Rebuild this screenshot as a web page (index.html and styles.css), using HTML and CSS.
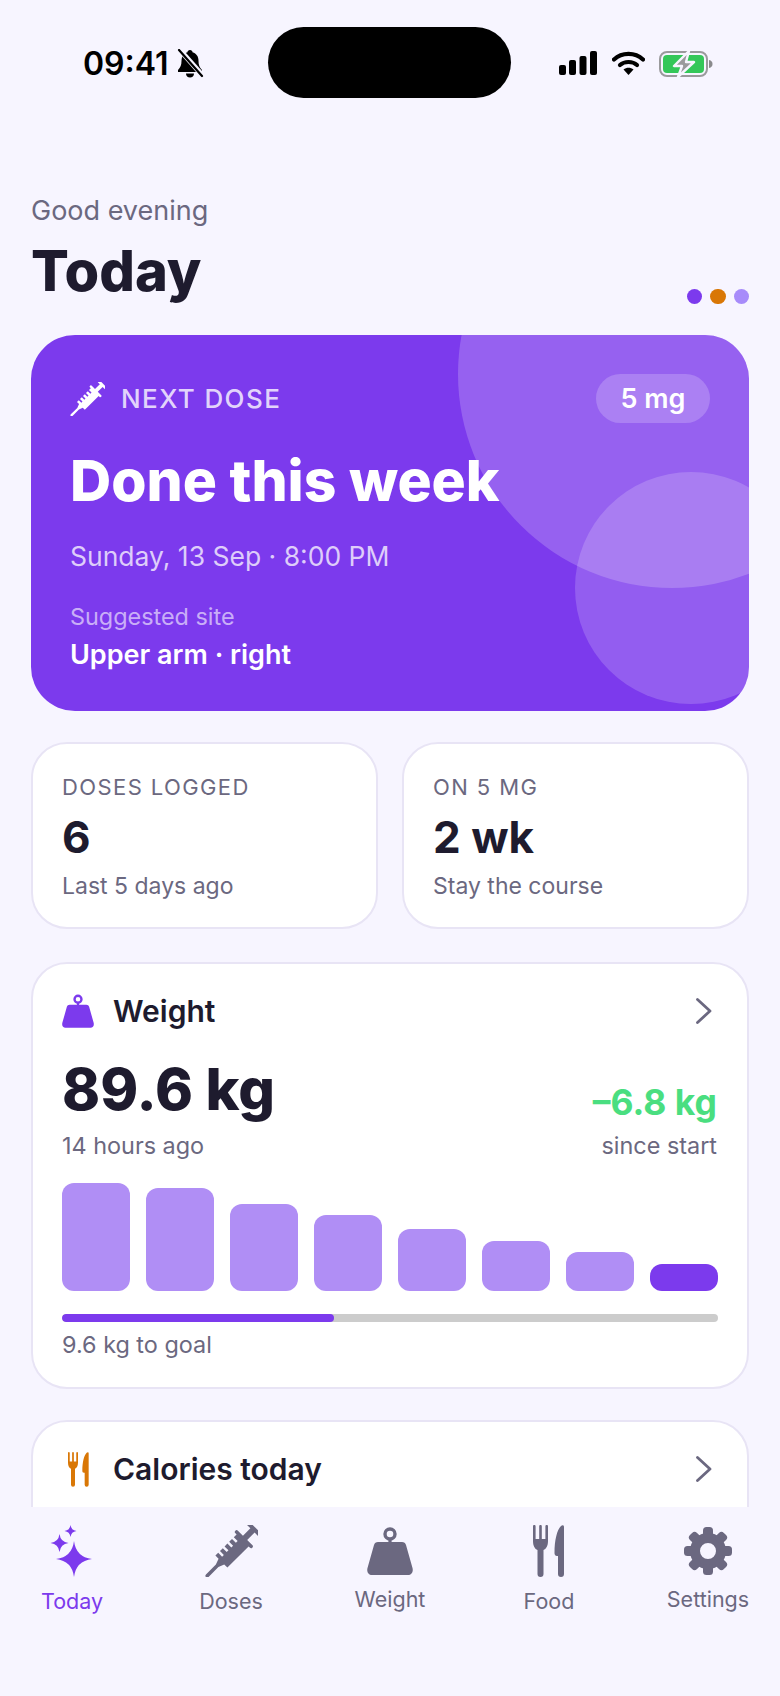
FILE: index.html
```html
<html>
<head>
    <title>Today</title>
    <link rel="stylesheet" href="styles.css">
</head>
<body>

<svg class="defs" width="0" height="0">
    <symbol id="syringe" viewBox="0 0 53 52">
        <g transform="translate(27 26) rotate(-45) translate(-35 0)">
            <path d="M0 -1.8 H14 L20 -4 V-8.5 H24 V-3 H26.5 V-8.5 H30.5 V-3 H33 V-8.5 H37 V-3 H39.5 V-8.5 H43.5 V-3 H46 V-8.5 H50 V-10.5 Q50 -12 51.7 -12 Q53.5 -12 53.5 -10.5 V-3 H64 V-9.5 Q64 -11 66 -11 Q68 -11 68 -9.5 V9.5 Q68 11 66 11 Q64 11 64 9.5 V3 H53.5 V10.5 Q53.5 12 51.7 12 Q50 12 50 10.5 V8.5 H20 V4 L14 1.8 H0 Q-1.8 1.8 -1.8 0 Q-1.8 -1.8 0 -1.8Z"/>
        </g>
    </symbol>
    <symbol id="scale" viewBox="0 0 46 48">
        <circle cx="23" cy="7" r="5" fill="none" stroke="currentColor" stroke-width="3.4"/>
        <path d="M21.4 11 H24.6 V16 H21.4Z"/>
        <path d="M11 15 H35 C37 15 38.5 16 39 18 L45.5 41 C46.5 45 44.5 48 41 48 H5 C1.5 48 -0.5 45 0.5 41 L7 18 C7.5 16 9 15 11 15Z"/>
    </symbol>
    <symbol id="cutlery" viewBox="0 0 33 52">
        <path d="M1.3 1.2 V15 M7.5 1.2 V15 M13.7 1.2 V15" fill="none" stroke="currentColor" stroke-width="2.6" stroke-linecap="round"/>
        <path d="M0 14 H15 V16 C15 21 13 24 10.5 25 V49 A3 3 0 0 1 4.5 49 V25 C2 24 0 21 0 16Z"/>
        <path d="M31 2 V49 A3 3 0 0 1 25 49 V31 H24 C22 31 21.5 29.5 21.5 28 C21.5 15 24 5 28 1 C29.5 -0.5 31 0 31 2Z"/>
    </symbol>
    <symbol id="chevron" viewBox="0 0 16 26">
        <path d="M1.5 1.5 L14 13 L1.5 24.5" fill="none" stroke="currentColor" stroke-width="2.8" stroke-linecap="round" stroke-linejoin="round"/>
    </symbol>
</svg>

<div id="outer">

    <div class="statusbar">
        <div class="status-left">
            <span class="clock">09:41</span>
            <svg class="bell" width="27" height="29" viewBox="0 0 27 29">
                <path d="M13 1 C14.5 1 15.5 2 15.5 3.2 C19.5 4.4 21.5 7.5 21.5 12 C21.5 16 22.5 18 25 21 V23 H1 V21 C3.5 18 4.5 16 4.5 12 C4.5 7.5 6.5 4.4 10.5 3.2 C10.5 2 11.5 1 13 1Z"/>
                <path d="M9 24.5 H17 C17 27 15.3 28.5 13 28.5 C10.7 28.5 9 27 9 24.5Z"/>
                <path d="M3 1 L26 27" stroke="#f7f5ff" stroke-width="5"/>
                <path d="M2 1 L25 27" stroke="#000" stroke-width="2.2" stroke-linecap="round"/>
            </svg>
        </div>
        <div class="island"></div>
        <div class="status-right">
            <svg width="38" height="24" viewBox="0 0 38 24">
                <rect x="0" y="14" width="7" height="10" rx="2"/>
                <rect x="10" y="9" width="7" height="15" rx="2"/>
                <rect x="20.5" y="5" width="7" height="19" rx="2"/>
                <rect x="31" y="0" width="7" height="24" rx="2"/>
            </svg>
            <svg class="wifi" width="33" height="24" viewBox="0 0 33 24">
                <path d="M2 8.5 C10 1 23 1 31 8.5" fill="none" stroke="#000" stroke-width="4.2" stroke-linecap="round"/>
                <path d="M8 14 C12.5 10 20.5 10 25 14" fill="none" stroke="#000" stroke-width="4.2" stroke-linecap="round"/>
                <path d="M11.5 18.5 C14.5 16 18.5 16 21.5 18.5 L16.5 24Z"/>
            </svg>
            <svg class="battery" width="54" height="26" viewBox="0 0 54 26">
                <rect x="1" y="1" width="47" height="24" rx="7" fill="none" stroke="#9a9a9c" stroke-width="2"/>
                <rect x="4" y="4" width="41" height="18" rx="4" fill="#34c759"/>
                <path d="M50 9 C52.5 9.5 53.5 11 53.5 13 C53.5 15 52.5 16.5 50 17Z" fill="#8a8a8c"/>
                <path d="M30 0 L15 15 H23 L19 26 L35 11 H27Z" fill="#9a9a9c" stroke="#f7f5ff" stroke-width="2.4" stroke-linejoin="round"/>
            </svg>
        </div>
    </div>

    <div class="content">
        <div class="pagehead">
            <div>
                <div class="greeting">Good evening</div>
                <h1 class="title">Today</h1>
            </div>
            <div class="dots">
                <span class="dot dot-purple"></span>
                <span class="dot dot-orange"></span>
                <span class="dot dot-light"></span>
            </div>
        </div>

        <div class="hero">
            <div class="circle circle-big"></div>
            <div class="circle circle-small"></div>
            <div class="hero-top">
                <div class="hero-label">
                    <svg class="hero-icon"><use href="#syringe"/></svg>
                    NEXT DOSE
                </div>
                <div class="pill">5 mg</div>
            </div>
            <div class="hero-title">Done this week</div>
            <div class="hero-date">Sunday, 13 Sep · 8:00 PM</div>
            <div class="hero-site-label">Suggested site</div>
            <div class="hero-site">Upper arm · right</div>
        </div>

        <div class="stats">
            <div class="card stat">
                <div class="stat-label">DOSES LOGGED</div>
                <div class="stat-value">6</div>
                <div class="muted">Last 5 days ago</div>
            </div>
            <div class="card stat">
                <div class="stat-label">ON 5 MG</div>
                <div class="stat-value">2 wk</div>
                <div class="muted">Stay the course</div>
            </div>
        </div>

        <div class="card panel">
            <div class="panel-head">
                <span class="panel-icon"><svg class="icon-scale"><use href="#scale"/></svg></span>
                <span class="panel-title">Weight</span>
                <svg class="chevron"><use href="#chevron"/></svg>
            </div>
            <div class="weight-row">
                <div>
                    <div class="weight-now">89.6 kg</div>
                    <div class="muted">14 hours ago</div>
                </div>
                <div class="weight-change">
                    <div class="weight-delta">–6.8 kg</div>
                    <div class="muted">since start</div>
                </div>
            </div>
            <div class="bars">
                <div class="bar" style="height: 108px"></div>
                <div class="bar" style="height: 103px"></div>
                <div class="bar" style="height: 87px"></div>
                <div class="bar" style="height: 76px"></div>
                <div class="bar" style="height: 62px"></div>
                <div class="bar" style="height: 50px"></div>
                <div class="bar" style="height: 39px"></div>
                <div class="bar bar-now" style="height: 27px"></div>
            </div>
            <div class="track"><div class="track-fill" style="width: 41.4%"></div></div>
            <div class="muted">9.6 kg to goal</div>
        </div>

        <div class="card panel">
            <div class="panel-head">
                <span class="panel-icon"><svg class="icon-cutlery"><use href="#cutlery"/></svg></span>
                <span class="panel-title">Calories today</span>
                <svg class="chevron"><use href="#chevron"/></svg>
            </div>
        </div>
    </div>

    <div class="tabbar">
        <div class="tab tab-active">
            <svg class="tab-icon" width="44" height="52" viewBox="0 0 44 52">
                <path d="M24 16 Q26 32 42 34 Q26 36 24 52 Q22 36 6 34 Q22 32 24 16Z"/>
                <path d="M9.5 9 Q10.5 17 18.5 18 Q10.5 19 9.5 27 Q8.5 19 0.5 18 Q8.5 17 9.5 9Z"/>
                <path d="M20.5 0 Q21.2 5.3 26.5 6 Q21.2 6.7 20.5 12 Q19.8 6.7 14.5 6 Q19.8 5.3 20.5 0Z"/>
            </svg>
            <span>Today</span>
        </div>
        <div class="tab">
            <svg class="tab-icon" width="53" height="52"><use href="#syringe"/></svg>
            <span>Doses</span>
        </div>
        <div class="tab">
            <svg class="tab-icon" width="46" height="48"><use href="#scale"/></svg>
            <span>Weight</span>
        </div>
        <div class="tab">
            <svg class="tab-icon" width="33" height="52"><use href="#cutlery"/></svg>
            <span>Food</span>
        </div>
        <div class="tab">
            <svg class="tab-icon" width="48" height="48" viewBox="0 0 48 48">
                <circle cx="24" cy="24" r="13" fill="none" stroke="currentColor" stroke-width="10"/>
                <rect x="19" y="0" width="10" height="11" rx="3.5"/>
                <rect x="19" y="0" width="10" height="11" rx="3.5" transform="rotate(45 24 24)"/>
                <rect x="19" y="0" width="10" height="11" rx="3.5" transform="rotate(90 24 24)"/>
                <rect x="19" y="0" width="10" height="11" rx="3.5" transform="rotate(135 24 24)"/>
                <rect x="19" y="0" width="10" height="11" rx="3.5" transform="rotate(180 24 24)"/>
                <rect x="19" y="0" width="10" height="11" rx="3.5" transform="rotate(225 24 24)"/>
                <rect x="19" y="0" width="10" height="11" rx="3.5" transform="rotate(270 24 24)"/>
                <rect x="19" y="0" width="10" height="11" rx="3.5" transform="rotate(315 24 24)"/>
            </svg>
            <span>Settings</span>
        </div>
    </div>

</div>

</body>
</html>
```

FILE: styles.css
```css
body {
    margin: 0;
    background: #f7f5ff;
    font-family: Inter, "Liberation Sans", sans-serif;
    color: #1e1b2e;
}

.defs {
    position: absolute;
}

#outer {
    width: 780px;
    height: 1696px;
    display: flex;
    flex-direction: column;
    overflow: hidden;
}

/* status bar */
.statusbar {
    height: 98px;
    padding-top: 27px;
    box-sizing: border-box;
    flex: none;
    display: grid;
    grid-template-columns: 268px 243px 1fr;
}

.status-left {
    padding-left: 83px;
    padding-top: 22px;
    display: flex;
    align-items: center;
    align-self: start;
    gap: 8px;
    color: #000;
}

.clock {
    font-size: 32px;
    line-height: 30px;
    font-weight: 600;
}

.bell {
    margin-top: -2px;
}

.island {
    height: 71px;
    background: #000;
    border-radius: 36px;
}

.status-right {
    padding-left: 48px;
    padding-top: 24px;
    display: flex;
    align-items: flex-start;
    gap: 15px;
}

.status-right .battery {
    margin-left: -1px;
}

/* main */
.content {
    flex: 1;
    min-height: 0;
    overflow: hidden;
    padding: 0 31px;
}

.pagehead {
    display: flex;
    justify-content: space-between;
    align-items: flex-end;
    padding-top: 97px;
    margin-bottom: 30px;
}

.greeting {
    font-size: 27px;
    line-height: 32px;
    color: #6b6880;
}

.title {
    margin: 10px 0 0 0;
    font-size: 56px;
    line-height: 68px;
    font-weight: 800;
}

.dots {
    display: flex;
    gap: 8px;
    padding-bottom: 1px;
}

.dot {
    width: 15.5px;
    height: 15.5px;
    border-radius: 50%;
}

.dot-purple { background: #7c3aed; }
.dot-orange { background: #d97706; }
.dot-light { background: #a78bfa; }

/* hero */
.hero {
    position: relative;
    overflow: hidden;
    height: 376px;
    box-sizing: border-box;
    padding: 39px 39px 0 39px;
    background: #7c3aed;
    border-radius: 44px;
    color: #ffffff;
}

.circle {
    position: absolute;
    border-radius: 50%;
    background: rgba(255, 255, 255, 0.2);
}

.circle-big {
    width: 428px;
    height: 428px;
    top: -175px;
    right: -137px;
}

.circle-small {
    width: 232px;
    height: 232px;
    bottom: 7px;
    right: -58px;
    background: rgba(255, 255, 255, 0.18);
}

.hero-top {
    position: relative;
    display: flex;
    justify-content: space-between;
    align-items: center;
    height: 49px;
}

.hero-label {
    display: flex;
    align-items: center;
    gap: 16px;
    font-size: 26px;
    font-weight: 500;
    letter-spacing: 1.4px;
    color: rgba(255, 255, 255, 0.8);
}

.hero-icon {
    width: 35px;
    height: 34px;
    fill: #ffffff;
    color: #ffffff;
}

.pill {
    width: 114px;
    height: 49px;
    border-radius: 25px;
    background: rgba(255, 255, 255, 0.2);
    font-size: 27px;
    font-weight: 600;
    line-height: 49px;
    text-align: center;
}

.hero-title {
    position: relative;
    margin-top: 24px;
    font-size: 57px;
    line-height: 68px;
    font-weight: 800;
}

.hero-date {
    position: relative;
    margin-top: 25px;
    font-size: 26.5px;
    line-height: 32px;
    color: rgba(255, 255, 255, 0.75);
}

.hero-site-label {
    position: relative;
    margin-top: 30px;
    font-size: 23.4px;
    line-height: 30px;
    color: rgba(255, 255, 255, 0.6);
}

.hero-site {
    position: relative;
    margin-top: 6px;
    font-size: 27px;
    line-height: 34px;
    font-weight: 600;
}

/* cards */
.card {
    background: #ffffff;
    border: solid 2px #e8e4f5;
    box-sizing: border-box;
}

.stats {
    display: grid;
    grid-template-columns: 1fr 1fr;
    gap: 24px;
    margin-top: 31px;
}

.stat {
    height: 187px;
    padding: 29px 28px 0 29px;
    border-radius: 36px;
}

.stat-label {
    font-size: 22px;
    line-height: 28px;
    letter-spacing: 1.4px;
    color: #6b6880;
}

.stat-value {
    margin-top: 9px;
    font-size: 44px;
    line-height: 54px;
    font-weight: 700;
}

.muted {
    font-size: 23.4px;
    line-height: 28px;
    color: #6b6880;
}

.stat .muted {
    margin-top: 8px;
    font-size: 23px;
}

.panel {
    height: 427px;
    margin-top: 33px;
    padding: 26px 29px;
    border-radius: 36px;
}

.panel + .panel {
    margin-top: 31px;
}

.panel-head {
    display: flex;
    align-items: center;
    height: 42px;
    color: #1e1b2e;
}

.panel-icon {
    width: 51px;
    display: flex;
}

.icon-scale {
    width: 32px;
    height: 34px;
    fill: #7c3aed;
    color: #7c3aed;
}

.icon-cutlery {
    width: 22px;
    height: 35px;
    margin-left: 6px;
    fill: #d97706;
    color: #d97706;
}

.panel-title {
    flex: 1;
    font-size: 30px;
    font-weight: 600;
}

.chevron {
    width: 16px;
    height: 26px;
    margin-right: 6px;
    color: #6b6880;
}

.weight-row {
    display: flex;
    justify-content: space-between;
    align-items: flex-end;
    margin-top: 23px;
}

.weight-row .muted {
    margin-top: 9px;
}

.weight-now {
    font-size: 57.5px;
    line-height: 68px;
    font-weight: 800;
}

.weight-change {
    padding-right: 1px;
    text-align: right;
}

.weight-delta {
    font-size: 35.5px;
    line-height: 40px;
    font-weight: 700;
    color: #4ade80;
}

.bars {
    display: flex;
    align-items: flex-end;
    gap: 16px;
    height: 108px;
    margin-top: 23px;
}

.bar {
    flex: 1;
    background: #b08ef5;
    border-radius: 12px;
}

.bar-now {
    background: #7c3aed;
}

.track {
    height: 8px;
    margin-top: 23px;
    background: #cccccc;
    border-radius: 4px;
    overflow: hidden;
}

.track-fill {
    height: 100%;
    background: #7c3aed;
    border-radius: 4px;
}

.track + .muted {
    margin-top: 9px;
}

/* tab bar */
.tabbar {
    flex: none;
    height: 189px;
    box-sizing: border-box;
    padding-top: 17px;
    display: flex;
    justify-content: center;
    align-items: flex-start;
    background: #f7f5ff;
}

.tab {
    flex: none;
    width: 159px;
    height: 91px;
    display: flex;
    flex-direction: column;
    align-items: center;
    justify-content: center;
    gap: 11px;
    font-size: 21.5px;
    line-height: 26px;
    color: #6b6880;
    fill: #6b6880;
}

.tab-active {
    color: #7c3aed;
    fill: #7c3aed;
}

.tab-icon {
    flex: none;
}
```
